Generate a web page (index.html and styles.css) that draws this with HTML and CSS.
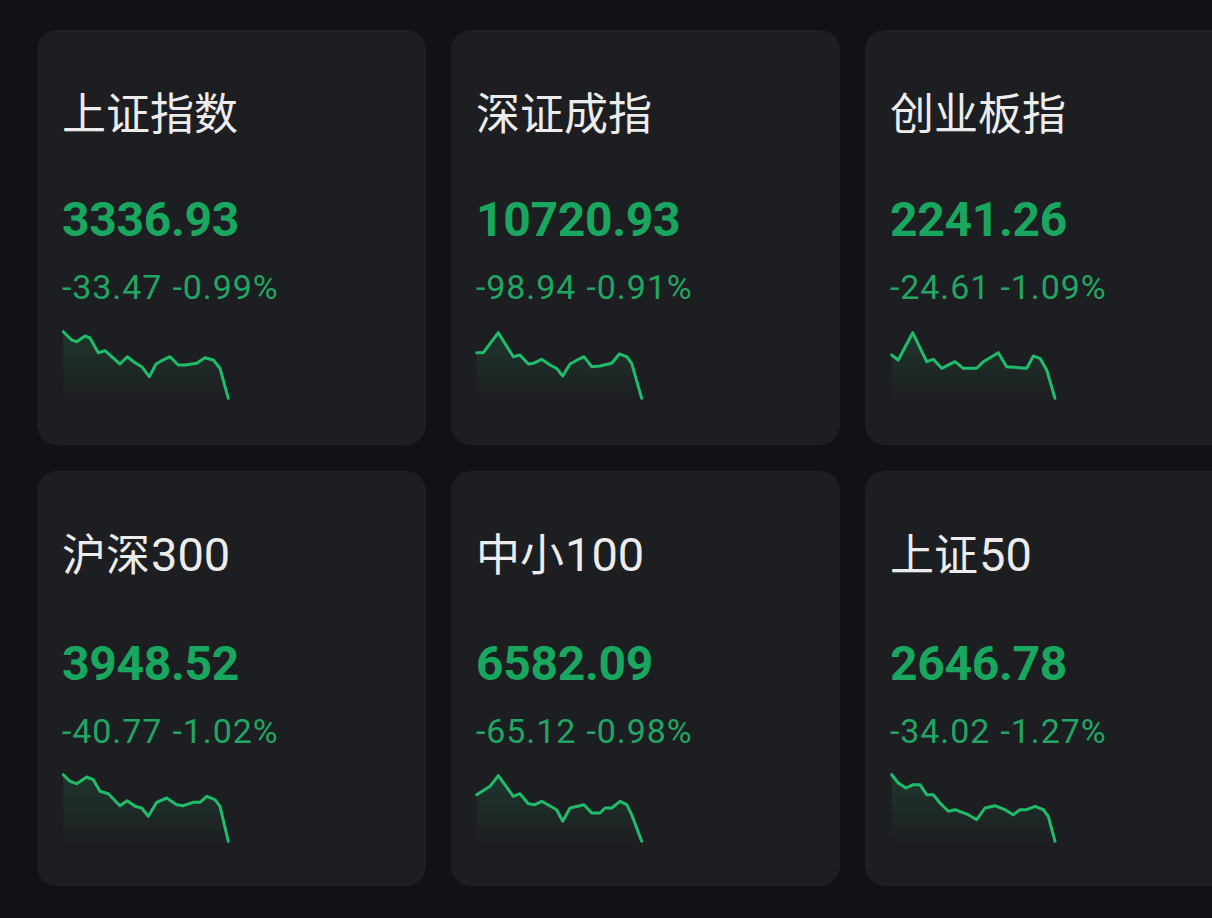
FILE: index.html
```html
<!DOCTYPE html>
<html lang="zh-CN">
<head>
  <meta charset="UTF-8" />
  <title>指数行情</title>
  <meta name="viewport" content="width=device-width, initial-scale=1.0">
  <link rel="stylesheet" href="styles.css">
</head>
<body>
  <!-- 公用渐变 -->
  <svg class="defs" width="0" height="0">
    <defs>
      <linearGradient id="areaFade" x1="0" y1="0" x2="0" y2="1">
        <stop offset="0" stop-color="#1fb565" stop-opacity="0.16" />
        <stop offset="1" stop-color="#1fb565" stop-opacity="0" />
      </linearGradient>
    </defs>
  </svg>

  <div class="grid">
    <div class="card">
      <div class="name">上证指数</div>
      <div class="price">3336.93</div>
      <div class="change">-33.47 -0.99%</div>
      <svg class="spark" viewBox="0 0 170 72">
        <path class="area" d="M1.3,3.7 L9.7,12 L14.7,13.7 L23,8 L28,10 L36.3,24.7 L43,22.7 L49.7,28.7 L58,36 L65.3,28.7 L73,34.7 L79.7,38.7 L87.3,48.7 L94,36 L99.7,32.7 L108,28.7 L116.3,37 L123,37 L134.7,35.3 L143,29.7 L151.3,32 L158,40.3 L166.3,70.3 L166.3,72 L1.3,72 Z" />
        <path class="line" d="M1.3,3.7 L9.7,12 L14.7,13.7 L23,8 L28,10 L36.3,24.7 L43,22.7 L49.7,28.7 L58,36 L65.3,28.7 L73,34.7 L79.7,38.7 L87.3,48.7 L94,36 L99.7,32.7 L108,28.7 L116.3,37 L123,37 L134.7,35.3 L143,29.7 L151.3,32 L158,40.3 L166.3,70.3" />
      </svg>
    </div>

    <div class="card">
      <div class="name">深证成指</div>
      <div class="price">10720.93</div>
      <div class="change">-98.94 -0.91%</div>
      <svg class="spark" viewBox="0 0 170 72">
        <path class="area" d="M0.7,24.7 L7.3,24.7 L22.3,4.7 L37.3,28.7 L44,27 L52.3,36 L57.3,35.3 L65.7,31.3 L74,37 L80.7,40.3 L86.7,48 L94,36 L100,32.7 L108,28.7 L115.7,38.7 L124,38 L135.7,35.3 L143.3,26 L150.7,28.7 L155.7,35.3 L165.7,70.3 L165.7,72 L0.7,72 Z" />
        <path class="line" d="M0.7,24.7 L7.3,24.7 L22.3,4.7 L37.3,28.7 L44,27 L52.3,36 L57.3,35.3 L65.7,31.3 L74,37 L80.7,40.3 L86.7,48 L94,36 L100,32.7 L108,28.7 L115.7,38.7 L124,38 L135.7,35.3 L143.3,26 L150.7,28.7 L155.7,35.3 L165.7,70.3" />
      </svg>
    </div>

    <div class="card">
      <div class="name">创业板指</div>
      <div class="price">2241.26</div>
      <div class="change">-24.61 -1.09%</div>
      <svg class="spark" viewBox="0 0 170 72">
        <path class="area" d="M1.7,27 L8.3,32 L22.7,4.7 L36.7,33.7 L43.3,31.3 L51.7,40.3 L65,33.7 L73.3,40.3 L86.7,40.3 L93.3,33.7 L108.3,24.7 L116.7,38.7 L136.7,40.3 L143.3,28 L150,30.3 L156.7,42 L165,70.3 L165,72 L1.7,72 Z" />
        <path class="line" d="M1.7,27 L8.3,32 L22.7,4.7 L36.7,33.7 L43.3,31.3 L51.7,40.3 L65,33.7 L73.3,40.3 L86.7,40.3 L93.3,33.7 L108.3,24.7 L116.7,38.7 L136.7,40.3 L143.3,28 L150,30.3 L156.7,42 L165,70.3" />
      </svg>
    </div>

    <div class="card">
      <div class="name">沪深<span class="num">300</span></div>
      <div class="price">3948.52</div>
      <div class="change">-40.77 -1.02%</div>
      <svg class="spark" viewBox="0 0 170 72">
        <path class="area" d="M1.3,2.7 L8,9.3 L14.7,11.7 L24.7,5 L31.3,7.7 L38,19.3 L46.3,21.7 L58,33.7 L65.3,28.7 L73,34.3 L79.7,36 L86.3,44.3 L94.7,30.3 L104.7,26 L114.7,32.7 L121.3,33.7 L131.3,30.3 L138,30.3 L144.7,24.3 L153,27.7 L158,34.3 L166.3,69.3 L166.3,72 L1.3,72 Z" />
        <path class="line" d="M1.3,2.7 L8,9.3 L14.7,11.7 L24.7,5 L31.3,7.7 L38,19.3 L46.3,21.7 L58,33.7 L65.3,28.7 L73,34.3 L79.7,36 L86.3,44.3 L94.7,30.3 L104.7,26 L114.7,32.7 L121.3,33.7 L131.3,30.3 L138,30.3 L144.7,24.3 L153,27.7 L158,34.3 L166.3,69.3" />
      </svg>
    </div>

    <div class="card">
      <div class="name">中小<span class="num">100</span></div>
      <div class="price">6582.09</div>
      <div class="change">-65.12 -0.98%</div>
      <svg class="spark" viewBox="0 0 170 72">
        <path class="area" d="M0.7,22.7 L14,14.3 L22.3,3.7 L37.3,24.3 L44,21.7 L52.3,31.7 L59,32.7 L65.7,29.3 L80.7,37.7 L86.7,49.3 L94,36 L108,32.7 L115.7,41 L124,41 L129,36 L135.7,36 L144,29.3 L150.7,32.7 L155.7,42.7 L165.7,69.3 L165.7,72 L0.7,72 Z" />
        <path class="line" d="M0.7,22.7 L14,14.3 L22.3,3.7 L37.3,24.3 L44,21.7 L52.3,31.7 L59,32.7 L65.7,29.3 L80.7,37.7 L86.7,49.3 L94,36 L108,32.7 L115.7,41 L124,41 L129,36 L135.7,36 L144,29.3 L150.7,32.7 L155.7,42.7 L165.7,69.3" />
      </svg>
    </div>

    <div class="card">
      <div class="name">上证<span class="num">50</span></div>
      <div class="price">2646.78</div>
      <div class="change">-34.02 -1.27%</div>
      <svg class="spark" viewBox="0 0 170 72">
        <path class="area" d="M1.7,2.7 L8.3,11 L16,16 L23.3,12.7 L30,12.7 L36.7,22.7 L43.3,22.7 L50,31 L58.3,39.3 L65,37.7 L78.3,42.7 L86.7,47.7 L95,36 L105,33.7 L115,37.7 L123.3,42.7 L130,37.7 L136.7,37.7 L145,34.3 L153.3,37.7 L158.3,44.3 L165,69.3 L165,72 L1.7,72 Z" />
        <path class="line" d="M1.7,2.7 L8.3,11 L16,16 L23.3,12.7 L30,12.7 L36.7,22.7 L43.3,22.7 L50,31 L58.3,39.3 L65,37.7 L78.3,42.7 L86.7,47.7 L95,36 L105,33.7 L115,37.7 L123.3,42.7 L130,37.7 L136.7,37.7 L145,34.3 L153.3,37.7 L158.3,44.3 L165,69.3" />
      </svg>
    </div>
  </div>
</body>
</html>
```

FILE: styles.css
```css
html, body {
  margin: 0;
  height: 100%;
  overflow: hidden;
}
body {
  background: #111215;
  font-family: Roboto, "Noto Sans CJK SC", sans-serif;
  padding: 30px 0 0 37px;
  box-sizing: border-box;
}
.defs {
  position: absolute;
  width: 0;
  height: 0;
}
.grid {
  display: grid;
  grid-template-columns: repeat(3, 389px);
  grid-auto-rows: 415px;
  column-gap: 25px;
  row-gap: 26px;
}
.card {
  background: #1d1e21;
  border-radius: 20px;
  padding: 0 25px;
  display: flex;
  flex-direction: column;
}
.name {
  font-family: "Noto Sans CJK SC", sans-serif;
  font-size: 44px;
  line-height: 44px;
  color: #ececec;
  margin-top: 59px;
}
.name .num {
  font-family: Roboto, sans-serif;
  font-size: 47px;
  margin-left: 1px;
}
.price {
  font-family: Roboto, sans-serif;
  font-weight: 700;
  font-size: 48px;
  line-height: 48px;
  letter-spacing: -0.3px;
  color: #19a75f;
  margin-top: 63px;
}
.change {
  font-family: Roboto, sans-serif;
  font-size: 34px;
  line-height: 32px;
  letter-spacing: 0.9px;
  word-spacing: 1px;
  color: #21a562;
  margin-top: 27px;
}
.spark {
  width: 170px;
  height: 72px;
  margin-top: 25px;
  overflow: visible;
}
.spark .line {
  fill: none;
  stroke: #1fbd6a;
  stroke-width: 3;
  stroke-linejoin: round;
  stroke-linecap: round;
}
.spark .area {
  fill: url(#areaFade);
}
```
